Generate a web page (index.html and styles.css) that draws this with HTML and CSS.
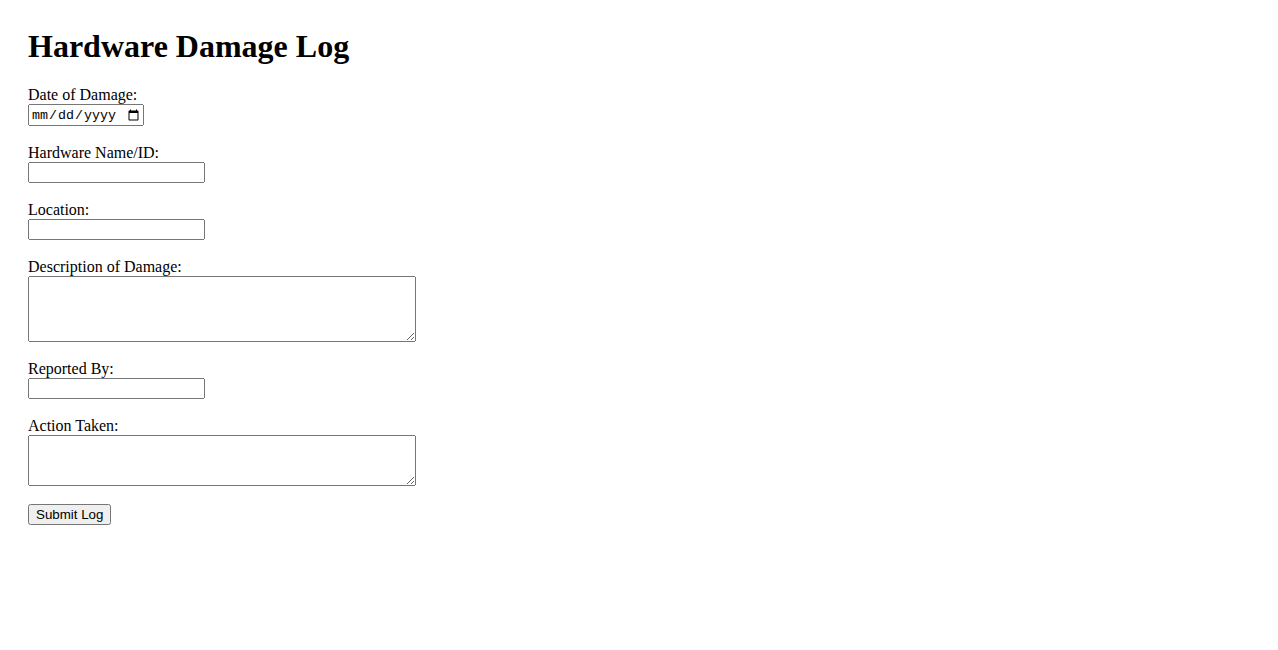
FILE: index.html
```html
<!DOCTYPE html>
<html lang="en">
<head>
  <meta charset="UTF-8">
  <meta name="viewport" content="width=device-width, initial-scale=1.0">
  <title>Hardware Damage Log</title>
  <link rel="stylesheet" href="styles.css">
</head>
<body>
  <div class="page">
    <h1>Hardware Damage Log</h1>

    <form class="log-form" onsubmit="return false;">
      <div class="form-group">
        <label for="damage-date">Date of Damage:</label>
        <input type="date" id="damage-date" class="date-input">
      </div>

      <div class="form-group">
        <label for="hardware">Hardware Name/ID:</label>
        <input type="text" id="hardware" class="text-input">
      </div>

      <div class="form-group">
        <label for="location">Location:</label>
        <input type="text" id="location" class="text-input">
      </div>

      <div class="form-group">
        <label for="description">Description of Damage:</label>
        <textarea id="description" class="text-area text-area-tall"></textarea>
      </div>

      <div class="form-group">
        <label for="reported-by">Reported By:</label>
        <input type="text" id="reported-by" class="text-input">
      </div>

      <div class="form-group">
        <label for="action">Action Taken:</label>
        <textarea id="action" class="text-area text-area-short"></textarea>
      </div>

      <button type="submit" class="submit-button">Submit Log</button>
    </form>
  </div>
</body>
</html>
```

FILE: styles.css
```css
body {
  margin: 8px;
  font-family: "Liberation Serif", "Times New Roman", serif;
  font-size: 16px;
  color: #000;
  background: #fff;
}

.page {
  padding: 20px;
}

h1 {
  font-size: 32px;
  font-weight: bold;
  margin: 0 0 0.67em;
}

.form-group {
  margin-bottom: 18px;
}

.form-group label {
  display: block;
}

.text-input,
.date-input,
.text-area,
.submit-button {
  font-family: "Liberation Sans", Arial, sans-serif;
  font-size: 13.333px;
  box-sizing: border-box;
  margin: 0;
}

.date-input {
  font-family: "Liberation Mono", monospace;
  width: 116px;
  height: 22px;
}

.text-input {
  width: 177px;
  height: 21px;
}

.text-area {
  display: block;
  font-family: "Liberation Mono", monospace;
  width: 388px;
}

.text-area-tall {
  height: 66px;
}

.text-area-short {
  height: 51px;
}

.submit-button {
  height: 21px;
}
```
